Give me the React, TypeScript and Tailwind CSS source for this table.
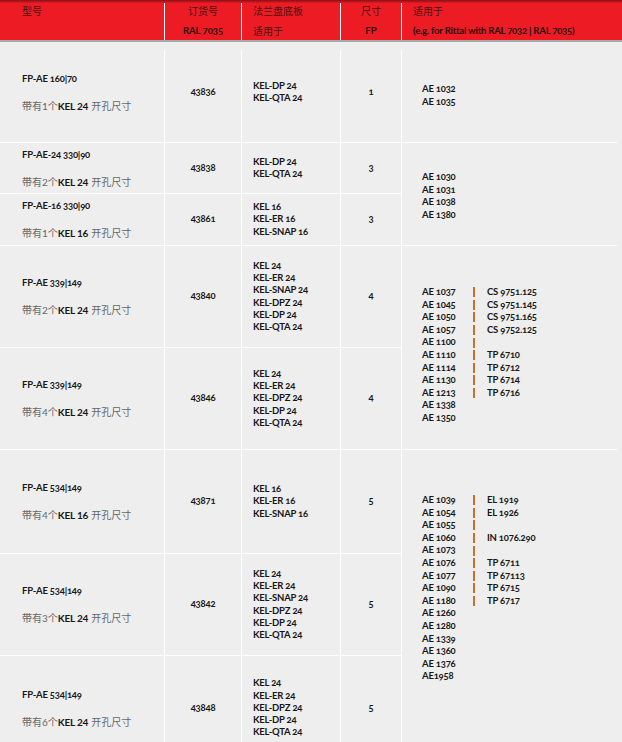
const rows = [
  { model: 'FP-AE 160|70', n: '1', kel: 'KEL 24', order: '43836', flange: ['KEL-DP 24', 'KEL-QTA 24'], fp: '1' },
  { model: 'FP-AE-24 330|90', n: '2', kel: 'KEL 24', order: '43838', flange: ['KEL-DP 24', 'KEL-QTA 24'], fp: '3' },
  { model: 'FP-AE-16 330|90', n: '1', kel: 'KEL 16', order: '43861', flange: ['KEL 16', 'KEL-ER 16', 'KEL-SNAP 16'], fp: '3' },
  {
    model: 'FP-AE 339|149', n: '2', kel: 'KEL 24', order: '43840',
    flange: ['KEL 24', 'KEL-ER 24', 'KEL-SNAP 24', 'KEL-DPZ 24', 'KEL-DP 24', 'KEL-QTA 24'], fp: '4',
  },
  { model: 'FP-AE 339|149', n: '4', kel: 'KEL 24', order: '43846', flange: ['KEL 24', 'KEL-ER 24', 'KEL-DPZ 24', 'KEL-DP 24', 'KEL-QTA 24'], fp: '4' },
  { model: 'FP-AE 534|149', n: '4', kel: 'KEL 16', order: '43871', flange: ['KEL 16', 'KEL-ER 16', 'KEL-SNAP 16'], fp: '5' },
  {
    model: 'FP-AE 534|149', n: '3', kel: 'KEL 24', order: '43842',
    flange: ['KEL 24', 'KEL-ER 24', 'KEL-SNAP 24', 'KEL-DPZ 24', 'KEL-DP 24', 'KEL-QTA 24'], fp: '5',
  },
  { model: 'FP-AE 534|149', n: '6', kel: 'KEL 24', order: '43848', flange: ['KEL 24', 'KEL-ER 24', 'KEL-DPZ 24', 'KEL-DP 24', 'KEL-QTA 24'], fp: '5' },
]

// enclosures grouped by the rows they span
const groups: Record<number, { span: string; pt: string; left: string[]; right: string[] }> = {
  0: { span: 'row-span-1', pt: 'pt-[33px]', left: ['AE 1032', 'AE 1035'], right: [] },
  1: { span: 'row-span-2', pt: 'pt-[28px]', left: ['AE 1030', 'AE 1031', 'AE 1038', 'AE 1380'], right: [] },
  3: {
    span: 'row-span-2',
    pt: 'pt-[40px]',
    left: ['AE 1037', 'AE 1045', 'AE 1050', 'AE 1057', 'AE 1100', 'AE 1110', 'AE 1114', 'AE 1130', 'AE 1213', 'AE 1338', 'AE 1350'],
    right: ['CS 9751.125', 'CS 9751.145', 'CS 9751.165', 'CS 9752.125', '', 'TP 6710', 'TP 6712', 'TP 6714', 'TP 6716'],
  },
  5: {
    span: 'row-span-3',
    pt: 'pt-[44px]',
    left: [
      'AE 1039', 'AE 1054', 'AE 1055', 'AE 1060', 'AE 1073', 'AE 1076', 'AE 1077', 'AE 1090',
      'AE 1180', 'AE 1260', 'AE 1280', 'AE 1339', 'AE 1360', 'AE 1376', 'AE1958',
    ],
    right: ['EL 1919', 'EL 1926', '', 'IN 1076.290', '', 'TP 6711', 'TP 67113', 'TP 6715', 'TP 6717'],
  },
}

const bold = "font-['Lato','Noto_Sans_CJK_SC',sans-serif] font-bold text-[9.5px] tracking-[-0.2px] text-[#181616] oldstyle-nums"

function Enclosures({ g }: { g: (typeof groups)[number] }) {
  return (
    <div className={`${g.span} ${g.pt} bg-[#eeeeee] pl-5`}>
      <div className="grid grid-cols-[51px_14px_auto]">
        {g.left.map((item, i) => (
          <div key={item} className="contents">
            <div className={`${bold} leading-[12.6px]`}>{item}</div>
            <div className="flex h-[12.6px] items-center">
              {i < g.right.length && <span className="block h-[10px] w-[2px] bg-[#c27328]" />}
            </div>
            <div className={`${bold} leading-[12.6px]`}>{g.right[i] ?? ''}</div>
          </div>
        ))}
      </div>
    </div>
  )
}

export default function App() {
  return (
    <div className="w-[622px] bg-[#eeeeee] font-['Lato','Noto_Sans_CJK_SC',sans-serif]">
      {/* header */}
      <div className="bg-[#ed1c24]">
        <div className="h-[3px] bg-linear-to-b from-[#8a1016] to-[#e01a22]" />
        <div className="grid h-[37px] w-[617px] grid-cols-[164px_76px_98px_60px_215px] gap-x-px bg-white">
          <div className="bg-[#ed1c24] pl-[22px] pt-[2px] text-[10px] leading-[12px] text-[#4a1214]">型号</div>
          <div className="flex flex-col items-center bg-[#ed1c24] pt-[2px]">
            <span className="text-[10px] leading-[12px] text-[#4a1214]">订货号</span>
            <span className="mt-[8px] text-[9.5px] font-bold leading-[12px] text-[#2a0a0b] oldstyle-nums">RAL 7035</span>
          </div>
          <div className="flex flex-col bg-[#ed1c24] pl-[11px] pt-[2px]">
            <span className="text-[10px] leading-[12px] text-[#4a1214]">法兰盘底板</span>
            <span className="mt-[8px] text-[10px] leading-[12px] text-[#4a1214]">适用于</span>
          </div>
          <div className="flex flex-col items-center bg-[#ed1c24] pt-[2px]">
            <span className="text-[10px] leading-[12px] text-[#4a1214]">尺寸</span>
            <span className="mt-[8px] text-[9.5px] font-bold leading-[12px] text-[#2a0a0b]">FP</span>
          </div>
          <div className="flex flex-col bg-[#ed1c24] pl-[11px] pt-[2px]">
            <span className="text-[10px] leading-[12px] text-[#4a1214]">适用于</span>
            <span className="mt-[8px] text-[9.5px] font-bold leading-[12px] tracking-[-0.2px] text-[#2a0a0b] oldstyle-nums">
              (e.g. for Rittal with RAL 7032 | RAL 7035)
            </span>
          </div>
        </div>
      </div>
      <div className="h-[2px] bg-[#a9a9a9]" />

      {/* body */}
      <div className="pt-[8px]">
        <div className="grid w-[617px] grid-cols-[164px_76px_98px_60px_215px] grid-rows-[92px_50px_51px_101px_101px_103px_101px_104px] gap-px bg-white">
          {rows.map((r, i) => {
            const shift = i === 0 ? 'pb-[8px]' : ''
            return (
              <div key={i} className="contents">
                <div className={`flex flex-col justify-center bg-[#eeeeee] pl-[22px] ${shift}`}>
                  <div className={`${bold} leading-[12px]`}>{r.model}</div>
                  <div className="mt-[15px] flex items-baseline text-[10px] leading-[12px] text-[#666666]">
                    <span>带有{r.n}个</span>
                    <span className="text-[10px] font-bold tracking-[-0.2px] text-[#181616]">{r.kel}</span>
                    <span className="ml-[3px]">开孔尺寸</span>
                  </div>
                </div>
                <div className={`flex items-center justify-center bg-[#eeeeee] ${shift}`}>
                  <span className={bold}>{r.order}</span>
                </div>
                <div className={`flex flex-col justify-center bg-[#eeeeee] pl-[11px] ${shift}`}>
                  {r.flange.map((f, j) => (
                    <div key={j} className={`${bold} leading-[12.2px]`}>
                      {f}
                    </div>
                  ))}
                </div>
                <div className={`flex items-center justify-center bg-[#eeeeee] ${shift}`}>
                  <span className={bold}>{r.fp}</span>
                </div>
                {groups[i] && <Enclosures g={groups[i]} />}
              </div>
            )
          })}
        </div>
      </div>
    </div>
  )
}
